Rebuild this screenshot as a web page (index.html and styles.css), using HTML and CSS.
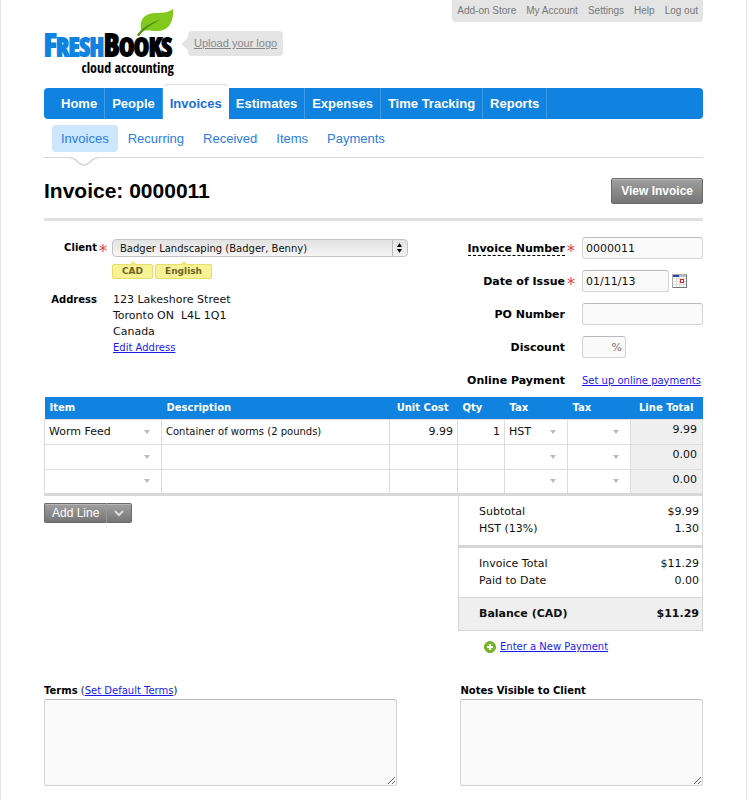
FILE: index.html
```html
<!DOCTYPE html>
<html lang="en">
<head>
  <meta charset="UTF-8" />
  <meta name="viewport" content="width=device-width, initial-scale=1.0"/>
  <title>Invoice: 0000011 - FreshBooks</title>
  <link rel="stylesheet" href="styles.css">
</head>
<body>
<div class="page">

  <header class="header">
    <div class="brand">
      <svg class="leaf" viewBox="0 0 38 28" width="38" height="28" aria-hidden="true">
        <path d="M1 26 C3 23 4 23 5 21 C3 9 10 4 20 4 C28 4 33 3 37 0 C38 14 32 22 21 22 C15 22 11 21 7 22 C5 23 4 25 3 27 Z" fill="#82c91e"/>
        <path d="M1 26 C7 18 14 14 26 10 C16 15 9 19 3 27 Z" fill="#4f8f12"/>
      </svg>
      <div class="logo"><span class="logo-fresh"><b>F</b>RESH</span><span class="logo-books"><b>B</b>OOKS</span></div>
      <div class="logo-sub">cloud accounting</div>
    </div>
    <a href="#" class="upload">Upload your logo</a>
    <nav class="top-links">
      <a href="#">Add-on Store</a>
      <a href="#">My Account</a>
      <a href="#">Settings</a>
      <a href="#">Help</a>
      <a href="#">Log out</a>
    </nav>
  </header>

  <nav class="tabs">
    <a href="#">Home</a>
    <a href="#">People</a>
    <a href="#" class="active">Invoices</a>
    <a href="#">Estimates</a>
    <a href="#">Expenses</a>
    <a href="#">Time Tracking</a>
    <a href="#">Reports</a>
  </nav>

  <nav class="subtabs">
    <a href="#" class="active">Invoices</a>
    <a href="#">Recurring</a>
    <a href="#">Received</a>
    <a href="#">Items</a>
    <a href="#">Payments</a>
    <svg class="notch" viewBox="0 0 26 10" width="26" height="10" aria-hidden="true">
      <path d="M0 0 H26 V1 C20 1 19 8 13 8 C7 8 6 1 0 1 Z" fill="#fff"/>
      <path d="M0 1 C6 1 7 8 13 8 C19 8 20 1 26 1" fill="none" stroke="#d6d6d6" stroke-width="1.5"/>
    </svg>
  </nav>

  <div class="title-bar">
    <h1>Invoice: 0000011</h1>
    <button type="button" class="btn btn-view">View Invoice</button>
  </div>

  <form>
    <div class="details">
      <div class="client">
        <label for="client">Client</label>
        <svg class="req" viewBox="0 0 8 8" width="8" height="8"><path d="M4 0V8M.5 2L7.500 6M.5 6L7.500 2"/></svg>
        <select id="client" class="client-select">
          <option>Badger Landscaping (Badger, Benny)</option>
        </select>
        <div class="tags">
          <span class="tag">CAD</span>
          <span class="tag">English</span>
        </div>
        <strong class="address-label">Address</strong>
        <div class="address">
          123 Lakeshore Street<br>
          Toronto ON&nbsp; L4L 1Q1<br>
          Canada<br>
          <a href="#">Edit Address</a>
        </div>
      </div>

      <div class="fields">
        <label for="number"><span class="hint">Invoice Number</span></label>
        <svg class="req" viewBox="0 0 8 8" width="8" height="8"><path d="M4 0V8M.5 2L7.500 6M.5 6L7.500 2"/></svg>
        <input type="text" id="number" value="0000011">

        <label for="date">Date of Issue</label>
        <svg class="req" viewBox="0 0 8 8" width="8" height="8"><path d="M4 0V8M.5 2L7.500 6M.5 6L7.500 2"/></svg>
        <div class="date-field">
          <input type="text" id="date" value="01/11/13">
          <button type="button" class="calendar" aria-label="Pick a date">
            <svg viewBox="0 0 15 14" width="15" height="14">
              <rect x=".5" y=".5" width="14" height="13" fill="#fff" stroke="#aaa"/>
              <path d="M1 4.500H14M1 7.500H14M1 10.500H14M4.500 3V13M7.500 3V13M11.500 3V13" stroke="#ddd" fill="none"/>
              <path d="M14.500 1V13.500H1" stroke="#777" fill="none"/>
              <rect x="1" y="1" width="6" height="2" fill="#2a3fb0"/>
              <rect x="7" y="1" width="7" height="2" fill="#bbb"/>
              <rect x="8.500" y="5.500" width="3" height="3" fill="#fff" stroke="#d22"/>
            </svg>
          </button>
        </div>

        <label for="po">PO Number</label>
        <input type="text" id="po">

        <label for="discount">Discount</label>
        <input type="text" id="discount" class="discount" placeholder="%">

        <strong>Online Payment</strong>
        <a href="#" class="field-link">Set up online payments</a>
      </div>
    </div>

    <table class="lines">
      <colgroup>
        <col class="col-item"><col><col class="col-cost"><col class="col-qty"><col class="col-tax"><col class="col-tax"><col class="col-total">
      </colgroup>
      <thead>
        <tr>
          <th>Item</th>
          <th>Description</th>
          <th class="num">Unit Cost</th>
          <th>Qty</th>
          <th>Tax</th>
          <th>Tax</th>
          <th class="num">Line Total</th>
        </tr>
      </thead>
      <tbody>
        <tr>
          <td><select aria-label="Item"><option>Worm Feed</option></select></td>
          <td class="desc"><input type="text" aria-label="Description" value="Container of worms (2 pounds)"></td>
          <td class="num"><input type="text" aria-label="Unit Cost" value="9.99"></td>
          <td class="num"><input type="text" aria-label="Qty" value="1"></td>
          <td><select aria-label="Tax"><option>HST</option></select></td>
          <td><select aria-label="Second tax"><option></option></select></td>
          <td class="total">9.99</td>
        </tr>
        <tr>
          <td><select aria-label="Item"><option></option></select></td>
          <td class="desc"><input type="text" aria-label="Description"></td>
          <td class="num"><input type="text" aria-label="Unit Cost"></td>
          <td class="num"><input type="text" aria-label="Qty"></td>
          <td><select aria-label="Tax"><option></option></select></td>
          <td><select aria-label="Second tax"><option></option></select></td>
          <td class="total">0.00</td>
        </tr>
        <tr>
          <td><select aria-label="Item"><option></option></select></td>
          <td class="desc"><input type="text" aria-label="Description"></td>
          <td class="num"><input type="text" aria-label="Unit Cost"></td>
          <td class="num"><input type="text" aria-label="Qty"></td>
          <td><select aria-label="Tax"><option></option></select></td>
          <td><select aria-label="Second tax"><option></option></select></td>
          <td class="total">0.00</td>
        </tr>
      </tbody>
    </table>

    <div class="summary">
      <div class="add-line">
        <button type="button" class="btn">Add Line</button>
        <button type="button" class="btn" aria-label="More line types">
          <svg viewBox="0 0 10 7" width="10" height="7"><path d="M1 1L5 5L9 1" fill="none" stroke="#ddd" stroke-width="2"/></svg>
        </button>
      </div>
      <div class="totals">
        <div class="group">
          <div class="row"><span>Subtotal</span><span>$9.99</span></div>
          <div class="row"><span>HST (13%)</span><span>1.30</span></div>
        </div>
        <div class="group">
          <div class="row"><span>Invoice Total</span><span>$11.29</span></div>
          <div class="row"><span>Paid to Date</span><span>0.00</span></div>
        </div>
        <div class="row balance"><span>Balance (CAD)</span><span>$11.29</span></div>
        <div class="payment">
          <svg viewBox="0 0 12 12" width="12" height="12" aria-hidden="true">
            <circle cx="6" cy="6" r="5.500" fill="#76b82a" stroke="#6aa82a"/>
            <path d="M6 3V9M3 6H9" stroke="#fff" stroke-width="2"/>
          </svg>
          <a href="#">Enter a New Payment</a>
        </div>
      </div>
    </div>

    <div class="notes">
      <div>
        <div class="notes-label"><label for="terms">Terms</label> (<a href="#">Set Default Terms</a>)</div>
        <textarea id="terms"></textarea>
      </div>
      <div>
        <div class="notes-label"><label for="notes">Notes Visible to Client</label></div>
        <textarea id="notes"></textarea>
      </div>
    </div>
  </form>

</div>
</body>
</html>
```
FILE: styles.css
```css
* {
  box-sizing: border-box;
}
body {
  margin: 0;
  background: #fff;
  color: #111;
  font-family: Verdana, "DejaVu Sans", sans-serif;
  font-size: 10px;
}
.page {
  min-height: 100vh;
  padding: 0 43px 14px;
  border-left: 1px solid #e4e4e4;
  border-right: 1px solid #e4e4e4;
}
a {
  color: #1a1aee;
}
label, strong {
  color: #000;
  font-weight: bold;
}
input, select, textarea, button {
  font-family: inherit;
  font-size: inherit;
  color: inherit;
  margin: 0;
}

/* header */
.header {
  display: flex;
  align-items: flex-start;
  height: 84px;
}
.brand {
  position: relative;
  width: 130px;
  padding-top: 31px;
  font-family: "Liberation Sans Narrow", "Open Sans Condensed", "Liberation Sans", sans-serif;
  font-weight: bold;
  color: #000;
  white-space: nowrap;
}
.leaf {
  position: absolute;
  left: 92px;
  top: 9px;
}
.logo {
  font-size: 25px;
  line-height: 28px;
  -webkit-text-stroke: 2px;
}
.logo b {
  font-size: 30px;
}
.logo-fresh {
  color: #0f83df;
}
.logo-sub {
  font-size: 14px;
  line-height: 16px;
  text-align: right;
}
.upload {
  position: relative;
  margin: 31px 0 0 14px;
  padding: 0 6px;
  border-radius: 4px;
  background: #e4e4e4;
  color: #888;
  font: 11px/25px "Liberation Sans", Arial, sans-serif;
}
.upload::before {
  content: "";
  position: absolute;
  left: -7px;
  top: 7px;
  border: 6px solid transparent;
  border-left: 0;
  border-right: 7px solid #e4e4e4;
}
.top-links {
  display: flex;
  gap: 10px;
  margin-left: auto;
  padding: 0 5px;
  border-radius: 0 0 4px 4px;
  background: #e4e4e4;
  font: 10px/22px "Liberation Sans", Arial, sans-serif;
}
.top-links a {
  color: #777;
  text-decoration: none;
}

/* navigation */
.tabs {
  display: flex;
  align-items: flex-end;
  margin-top: 4px;
  padding-left: 10px;
  height: 31px;
  border-radius: 4px;
  background: #0f83df;
}
.tabs a {
  padding: 0 7px;
  border-right: 1px solid #3d9ae6;
  color: #fff;
  font: bold 13px/31px "Liberation Sans", Arial, sans-serif;
  text-decoration: none;
}
.tabs .active {
  padding-top: 3px;
  border: 1px solid #ddd;
  border-width: 1px 0 0;
  border-radius: 4px 4px 0 0;
  background: #fff;
  color: #1c6fd6;
}
.subtabs {
  position: relative;
  display: flex;
  gap: 1px;
  padding: 6px 8px 5px;
  border-bottom: 1px solid #d6d6d6;
}
.subtabs a {
  padding: 0 9px;
  border-radius: 4px;
  color: #2a7de1;
  font: 13px/27px "Liberation Sans", Arial, sans-serif;
  text-decoration: none;
}
.subtabs .active {
  background: #cce6fc;
}
.notch {
  position: absolute;
  left: 27px;
  bottom: -10px;
}
.title-bar {
  display: flex;
  justify-content: space-between;
  align-items: center;
  padding: 20px 0 14px;
  border-bottom: 3px solid #e0e0e0;
}
h1 {
  margin: 0;
  color: #000;
  font: bold 21px/24px "Liberation Sans", Arial, sans-serif;
}
.btn {
  border: 1px solid #6a6a6a;
  border-radius: 2px;
  background: linear-gradient(#a0a0a0, #757575);
  box-shadow: inset 0 1px #b5b5b5;
  color: #fff;
  font-family: "Liberation Sans", Arial, sans-serif;
  cursor: pointer;
}
.btn-view {
  height: 26px;
  padding: 0 9px;
  font-size: 12px;
  font-weight: bold;
}

/* invoice details */
.details {
  display: flex;
  justify-content: space-between;
  gap: 24px;
  padding: 16px 0 6px;
}
.client {
  display: grid;
  grid-template-columns: 53px 15px minmax(0, 296px);
  flex: 0 1 364px;
  align-content: start;
  align-items: center;
  padding-top: 2px;
  line-height: 16px;
}
.client label, .address-label {
  text-align: right;
}
.req {
  justify-self: start;
  margin-left: 2px;
  fill: none;
  stroke: #e33;
}
.client-select {
  appearance: none;
  height: 18px;
  padding: 0 20px 0 7px;
  border: 1px solid #c4c4c4;
  border-radius: 4px;
  background:
    url("data:image/svg+xml,%3Csvg xmlns='http://www.w3.org/2000/svg' width='15' height='16'%3E%3Cpath d='M.5 0V16' stroke='%23bbb'/%3E%3Cpath d='M7.500 3L10 7H5ZM7.500 13L5 9H10Z'/%3E%3C/svg%3E") no-repeat right center,
    linear-gradient(#e2e2e2, #f5f5f5);
}
.tags {
  grid-column: 3;
  display: flex;
  gap: 2px;
  padding: 7px 0 13px;
}
.tag {
  position: relative;
  padding: 0 9px;
  border: 1px solid #e8dc6a;
  border-radius: 2px;
  background: #f8f296;
  color: #6d6524;
  font-size: 9px;
  font-weight: bold;
  line-height: 13px;
}
.tag::before {
  content: "";
  position: absolute;
  left: 50%;
  top: -4px;
  margin-left: -4px;
  border: 4px solid transparent;
  border-top: 0;
  border-bottom-color: #f0e67c;
}
.address-label {
  align-self: start;
}
.address {
  grid-column: 3;
  padding-left: 1px;
  font-size: 11px;
}
.address a {
  font-size: 10px;
}
.fields {
  display: grid;
  grid-template-columns: auto 17px 121px;
  grid-auto-rows: 22px;
  row-gap: 11px;
  align-items: center;
  font-size: 11px;
}
.fields label, .fields strong {
  grid-column: 1;
  text-align: right;
}
.fields input {
  grid-column: 3;
  width: 100%;
  height: 22px;
  padding: 0 3px;
}
.fields input, textarea {
  border: 1px solid #d4d4d4;
  border-top: 1px solid #bbb;
  border-radius: 3px;
  background: #fafafa;
}
.hint {
  border-bottom: 1px dashed #000;
}
.date-field {
  display: flex;
  align-items: center;
  gap: 3px;
}
.fields .date-field input {
  width: 87px;
}
.calendar {
  display: flex;
  padding: 0;
  border: 0;
  background: none;
}
.fields .discount {
  width: 44px;
  text-align: right;
}
.field-link {
  grid-column: 3;
  font-size: 10px;
  white-space: nowrap;
}

/* line items */
.lines {
  width: 100%;
  table-layout: fixed;
  border-collapse: collapse;
  border-bottom: 3px solid #d8d8d8;
}
.col-item {
  width: 117px;
}
.col-cost {
  width: 68px;
}
.col-qty {
  width: 47px;
}
.col-tax {
  width: 63px;
}
.col-total {
  width: 72px;
}
.lines th {
  height: 22px;
  padding: 0 5px;
  background: #0f83df;
  color: #fff;
  text-align: left;
}
.lines .num, .lines .num input {
  text-align: right;
}
.lines th.num {
  padding-right: 9px;
  white-space: nowrap;
}
.lines td {
  height: 25px;
  padding: 0;
  border: 1px solid #ddd;
  font-size: 11px;
}
.lines .desc {
  font-size: 10px;
}
.lines input, .lines select {
  display: block;
  width: 100%;
  height: 22px;
  padding: 0 4px;
  border: 0;
  background: transparent;
}
.lines select {
  appearance: none;
  background: url("data:image/svg+xml,%3Csvg xmlns='http://www.w3.org/2000/svg' width='6' height='4'%3E%3Cpath d='M0 0H6L3 4Z' fill='%23bbb'/%3E%3C/svg%3E") no-repeat right 11px center;
}
.lines .total {
  padding: 0 5px 4px;
  background: #efefef;
  text-align: right;
}

/* totals */
.summary {
  display: flex;
  justify-content: space-between;
  align-items: flex-start;
}
.add-line {
  display: flex;
  margin-top: 7px;
}
.add-line .btn {
  height: 20px;
  padding: 0 7px;
  font-size: 12px;
}
.add-line .btn:first-child {
  border-right-color: #999;
  border-radius: 2px 0 0 2px;
}
.add-line .btn:last-child {
  border-left: 0;
  border-radius: 0 2px 2px 0;
}
.totals {
  width: 245px;
}
.group {
  padding: 7px 0 8px;
  border: 1px solid #d6d6d6;
  border-top: 0;
  font-size: 11px;
}
.group:first-child {
  border-bottom-width: 3px;
}
.row {
  display: flex;
  justify-content: space-between;
  padding: 0 3px 0 20px;
  line-height: 17px;
}
.balance {
  border: 1px solid #d6d6d6;
  border-top: 0;
  background: #efefef;
  font-size: 11px;
  font-weight: bold;
  line-height: 32px;
}
.payment {
  display: flex;
  align-items: center;
  gap: 4px;
  padding: 10px 0 0 26px;
}

/* notes */
.notes {
  display: grid;
  grid-template-columns: 354fr 243fr;
  gap: 63px;
  margin-top: 30px;
}
.notes-label {
  line-height: 16px;
}
textarea {
  display: block;
  width: 100%;
  height: 87px;
  padding: 4px;
}
```
